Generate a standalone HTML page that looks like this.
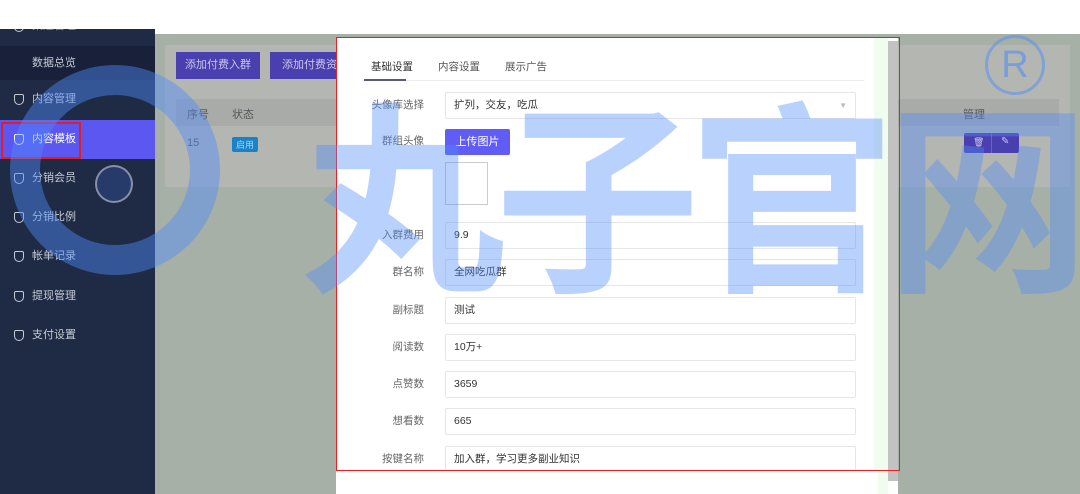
<!DOCTYPE html>
<html><head><meta charset="utf-8"><style>
*{box-sizing:border-box;margin:0;padding:0}
body{width:1080px;height:494px;overflow:hidden;background:#fff;font-family:"Liberation Sans","Noto Sans CJK SC",sans-serif;font-size:11px;position:relative}
.abs{position:absolute}
.side{left:0;top:29px;width:155px;height:465px;background:#1f2a44;overflow:hidden}
.si{position:absolute;left:0;width:155px;height:39px;color:#c5cad6;font-size:11px;line-height:39px;padding-left:32px}
.si i{position:absolute;left:14px;top:14px;width:10px;height:11px;border:1.3px solid #c5cad6;border-radius:2px 2px 5px 5px}
.main{left:155px;top:34px;width:925px;height:460px;background:#a7b0a6}
.card{left:165px;top:45px;width:905px;height:142px;background:#b4b6b2}
.btn{background:#4a3fae;color:#c9c6ee;font-size:11px;text-align:center;line-height:27px;height:27px;white-space:nowrap}
.modal{left:336px;top:37px;width:562px;height:457px;background:#fff}
.lab{position:absolute;right:0;width:90px;text-align:right;color:#666;font-size:10.5px;height:27px;line-height:27px}
.inp{position:absolute;left:445px;width:411px;height:27px;border:1px solid #e6e6e6;border-radius:2px;color:#333;font-size:10.5px;line-height:25px;padding-left:8px;background:#fff}
.wm{color:rgba(80,140,250,.4);font-size:205px;font-weight:bold;font-family:"Noto Sans CJK SC",sans-serif;line-height:1;letter-spacing:-10px}
</style></head><body>
<div class="abs side">
 <div class="si" style="top:-22px;color:#8b92a3"><i></i>渠道管理</div>
 <div class="si" style="top:17px;background:#18203a;height:34px;line-height:34px">数据总览</div>
 <div class="si" style="top:51px"><i></i>内容管理</div>
 <div class="si" style="top:91px;background:#5b57f0;color:#fff"><i style="border-color:#fff"></i>内容模板</div>
 <div class="abs" style="left:1px;top:93px;width:80px;height:37px;border:2px solid #e02020"></div>
 <div class="si" style="top:130px"><i></i>分销会员</div>
 <div class="si" style="top:169px"><i></i>分销比例</div>
 <div class="si" style="top:208px"><i></i>帐单记录</div>
 <div class="si" style="top:248px"><i></i>提现管理</div>
 <div class="si" style="top:287px"><i></i>支付设置</div>
</div>
<div class="abs main"></div>
<div class="abs card"></div>
<div class="abs btn" style="left:176px;top:52px;width:84px">添加付费入群</div>
<div class="abs btn" style="left:270px;top:52px;width:70px;text-align:left;padding-left:12px;overflow:hidden">添加付费资源</div>
<div class="abs" style="left:176px;top:99px;width:883px;height:27px;background:#a9aba8"></div>
<div class="abs" style="left:187px;top:106px;color:#555">序号</div>
<div class="abs" style="left:232px;top:106px;color:#555">状态</div>
<div class="abs" style="left:963px;top:106px;color:#555">管理</div>
<div class="abs" style="left:187px;top:137px;color:#555">15</div>
<div class="abs" style="left:232px;top:137px;background:#1a82c9;color:#a8d4f2;font-size:9px;padding:1px 4px;border-radius:2px">启用</div>
<div class="abs" style="left:964px;top:133px;width:55px;height:20px;background:#4a3fae;border-radius:2px"></div>
<div class="abs" style="left:991px;top:133px;width:1px;height:20px;background:#6c62c4"></div>
<div class="abs" style="left:973px;top:137px;color:#c9c6ee;font-size:9px">🗑</div>
<div class="abs" style="left:1001px;top:136px;color:#c9c6ee;font-size:10px">✎</div>
<div class="abs" style="left:985px;top:35px;width:60px;height:60px;border:3px solid rgba(80,140,250,.5);border-radius:50%;color:rgba(80,140,250,.6);font-size:38px;text-align:center;line-height:54px">R</div>

<div class="abs modal">
 <div class="abs" style="left:28px;top:0;width:524px;height:457px;background:#f0fcee"></div>
 <div class="abs" style="left:12px;top:0;width:526px;height:457px;background:#fff"></div>
 <div class="abs" style="left:552px;top:4px;width:10px;height:440px;background:#c2c2c2"></div>
 <div class="abs" style="left:26px;top:43px;width:502px;height:1px;background:#eee"></div>
 <div class="abs" style="left:35px;top:22px;color:#333;font-size:10.5px">基础设置</div>
 <div class="abs" style="left:28px;top:42px;width:42px;height:2px;background:#555a7a"></div>
 <div class="abs" style="left:102px;top:22px;color:#555;font-size:10.5px">内容设置</div>
 <div class="abs" style="left:169px;top:22px;color:#555;font-size:10.5px">展示广告</div>
</div>
<div class="lab" style="left:334px;top:92px">头像库选择</div>
<div class="inp" style="top:92px">扩列，交友，吃瓜<span style="position:absolute;right:8px;top:0;color:#bbb;font-size:8px">▼</span></div>
<div class="lab" style="left:334px;top:128px">群组头像</div>
<div class="abs" style="left:445px;top:129px;width:65px;height:26px;background:#615cf5;color:#fff;text-align:center;line-height:26px;border-radius:2px">上传图片</div>
<div class="abs" style="left:445px;top:162px;width:43px;height:43px;border:1px solid #ccc"></div>
<div class="lab" style="left:334px;top:222px">入群费用</div><div class="inp" style="top:222px">9.9</div>
<div class="lab" style="left:334px;top:259px">群名称</div><div class="inp" style="top:259px">全网吃瓜群</div>
<div class="lab" style="left:334px;top:297px">副标题</div><div class="inp" style="top:297px">测试</div>
<div class="lab" style="left:334px;top:334px">阅读数</div><div class="inp" style="top:334px">10万+</div>
<div class="lab" style="left:334px;top:371px">点赞数</div><div class="inp" style="top:371px">3659</div>
<div class="lab" style="left:334px;top:408px">想看数</div><div class="inp" style="top:408px">665</div>
<div class="lab" style="left:334px;top:446px">按键名称</div><div class="inp" style="top:446px">加入群，学习更多副业知识</div>
<div class="abs" style="left:336px;top:471px;width:542px;height:23px;background:#fff"></div>
<div class="abs" style="left:336px;top:37px;width:564px;height:434px;border:1.5px solid #e82020"></div>

<div class="abs" style="left:10px;top:65px;width:210px;height:210px;border:30px solid rgba(80,140,250,.45);border-radius:50%"></div>
<div class="abs" style="left:95px;top:165px;width:38px;height:38px;border:2px solid rgba(200,200,210,.6);border-radius:50%;background:rgba(60,100,200,.3)"></div>
<div class="abs wm" style="left:300px;top:85px">丸子官网</div>
</body></html>
